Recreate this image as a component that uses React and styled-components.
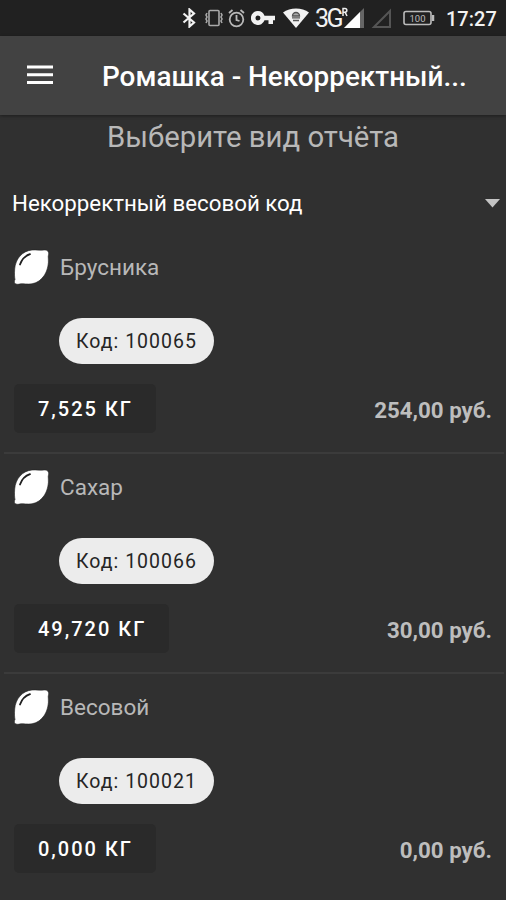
import React from 'react'
import styled, { createGlobalStyle } from 'styled-components'

const GlobalStyle = createGlobalStyle`
  * {
    box-sizing: border-box;
  }

  body {
    margin: 0;
    background-color: #303030;
    font-family: Roboto, 'Liberation Sans', sans-serif;
  }

  button {
    font-family: inherit;
    border: none;
  }

  svg {
    display: block;
    flex: none;
  }
`

const Screen = styled.div`
  width: 506px;
  height: 900px;
  overflow: hidden;
  background-color: #303030;
  color: #b8b8b8;
`

const StatusBar = styled.div`
  display: flex;
  align-items: center;
  height: 36px;
  padding-left: 182px;
  background-color: #212121;
  color: #f2f2f2;
`

const StatusIcon = styled.svg`
  margin-left: ${({ $gap }) => $gap || 0}px;
`

const Network = styled.span`
  width: 27px;
  margin-left: 6px;
  font-size: 25px;
  line-height: 36px;
  letter-spacing: -2.5px;
  padding-top: 1px;
`

const Clock = styled.span`
  margin-left: 11px;
  font-size: 20px;
  font-weight: 500;
  line-height: 36px;
  padding-top: 2px;
`

const AppBar = styled.header`
  display: flex;
  align-items: center;
  height: 79px;
  padding-left: 26px;
  background-color: #424242;
  color: #fff;
  box-shadow: 0 1px 3px rgba(0, 0, 0, 0.4);
`

const MenuButton = styled.button`
  width: 28px;
  height: 22px;
  padding: 0;
  margin-bottom: 2px;
  background: none;
`

const Title = styled.h1`
  margin: 3px 0 0 48px;
  font-size: 27.9px;
  font-weight: 500;
  line-height: 36px;
  white-space: nowrap;
`

const Heading = styled.h2`
  margin: 0;
  padding-top: 4px;
  font-size: 29.3px;
  font-weight: 400;
  line-height: 36px;
  text-align: center;
`

const Select = styled.div`
  display: flex;
  align-items: center;
  justify-content: space-between;
  height: 64px;
  margin-top: 16px;
  padding: 0 6px 0 12px;
  color: #fff;
  font-size: 22.3px;
`

const List = styled.ul`
  margin: -1px 0 0;
  padding: 0 2px 0 4px;
  list-style: none;
`

const Item = styled.li`
  height: 220px;
  padding: 15px 10px 0;
  border-bottom: 2px solid #3b3b3b;

  &:last-child {
    border-bottom: none;
  }
`

const Product = styled.div`
  display: flex;
  align-items: center;
  gap: 11px;
  height: 36px;
  font-size: 22.5px;
`

const Chip = styled.span`
  display: flex;
  align-items: center;
  justify-content: center;
  width: 155px;
  height: 46px;
  margin: 33px 0 0 45px;
  border-radius: 23px;
  background-color: #ececec;
  color: #252525;
  font-size: 19.5px;
  letter-spacing: 1px;
`

const Totals = styled.div`
  display: flex;
  align-items: center;
  justify-content: space-between;
  margin-top: 20px;
`

const Weight = styled.button`
  height: 49px;
  padding: 1px 23px 0 24px;
  border-radius: 5px;
  background-color: #2a2a2a;
  color: #fff;
  font-size: 20px;
  font-weight: 500;
  letter-spacing: 2px;
`

const Price = styled.span`
  padding-top: 2px;
  padding-right: 2px;
  color: #bdbdbd;
  font-size: 22.3px;
  font-weight: 700;
`

const products = [
  { name: 'Брусника', code: 100065, weight: '7,525', price: '254,00' },
  { name: 'Сахар', code: 100066, weight: '49,720', price: '30,00' },
  { name: 'Весовой', code: 100021, weight: '0,000', price: '0,00' }
]

function StatusIcons () {
  return (
    <>
      <StatusIcon width='15' height='20' viewBox='0 0 15 20' fill='none' stroke='currentColor' strokeWidth='2.2'>
        <path d='M1.5 5.5L12 14.5L7.5 18.5V1.5L12 5.5L1.5 14.5' />
      </StatusIcon>
      <StatusIcon $gap={7} width='20' height='18' viewBox='0 0 20 18' fill='none' stroke='#a8a8a8' strokeWidth='1.6'>
        <rect x='5' y='1.5' width='10' height='15' rx='1' />
        <path d='M3 4l-1 2 1 2-1 2 1 2-1 2M17 4l1 2-1 2 1 2-1 2 1 2' />
      </StatusIcon>
      <StatusIcon $gap={4} width='17' height='19' viewBox='0 0 17 19' fill='none' stroke='#b8b8b8' strokeWidth='1.8'>
        <circle cx='8.5' cy='10.5' r='6.8' />
        <path d='M8.5 6v5l3 1M1 4l3.5-3M16 4l-3.5-3' />
      </StatusIcon>
      <StatusIcon $gap={6} width='25' height='14' viewBox='0 0 25 14' fill='currentColor'>
        <path fillRule='evenodd' d='M7 0a7 7 0 0 1 6.5 4.700H24v4.600h-2V13h-4.500V9.300h-4A7 7 0 1 1 7 0zm0 4.500a2.500 2.500 0 1 0 0 5 2.500 2.500 0 0 0 0-5z' />
      </StatusIcon>
      <StatusIcon $gap={7} width='26' height='20' viewBox='0 0 26 20' fill='currentColor'>
        <path d='M0 4.500C7-1 19-1 26 4.500L13 20z' />
        <path d='M9.500 8a3.500 3.500 0 0 1 7 0zM9 9.800h8M10 12.500h6' fill='#aaa' stroke='#555' strokeWidth='1.300' />
      </StatusIcon>
      <Network>3G</Network>
      <StatusIcon width='24' height='22' viewBox='0 0 24 22'>
        <path d='M2 21L22 1v20z' fill='#666' />
        <path d='M2 21L18 5v16z' fill='#fff' />
        <path d='M1 9V1.500h2a1.800 1.800 0 0 1 0 3.700h-2M3 5.200L5 9' fill='none' stroke='#eee' strokeWidth='1.500' />
      </StatusIcon>
      <StatusIcon $gap={5} width='22' height='21' viewBox='0 0 22 21' fill='none' stroke='#555' strokeWidth='2'>
        <path d='M3 19L19 3v16z' />
      </StatusIcon>
      <StatusIcon $gap={10} width='32' height='16' viewBox='0 0 32 16' fill='none' stroke='#bbb' strokeWidth='1.600'>
        <rect x='1' y='1.500' width='27' height='13' rx='2' />
        <path d='M30 5v6' strokeWidth='2.500' />
        <text x='14.500' y='11.500' fill='#bbb' stroke='none' fontSize='9.500' textAnchor='middle'>100</text>
      </StatusIcon>
    </>
  )
}

function Lemon () {
  return (
    <svg width='35' height='36' viewBox='0 0 35 36'>
      <path
        d='M2 35C0 35 0 32 1 30.500C.5 28 .3 25 .7 20C1.500 10 8 2 18 1C23 .6 27 1.500 30.500 1C33 .5 35 2.500 34.700 5C34.500 6.500 34 7 34.300 9C35.500 21 29 33 18 34.800C13 35.500 10 34.500 7 34.800C5 35 4 35.700 2 35z'
        fill='#fff'
        stroke='#202020'
        strokeWidth='.6'
      />
      <path d='M6 15.500C8 10 11 6.800 16 5.200' fill='none' stroke='#202020' strokeWidth='1.800' strokeLinecap='round' />
    </svg>
  )
}

function ProductItem ({ name, code, weight, price }) {
  return (
    <Item>
      <Product>
        <Lemon />
        {name}
      </Product>
      <Chip>Код: {code}</Chip>
      <Totals>
        <Weight>{weight} КГ</Weight>
        <Price>{price} руб.</Price>
      </Totals>
    </Item>
  )
}

export default function App () {
  return (
    <Screen>
      <GlobalStyle />
      <StatusBar>
        <StatusIcons />
        <Clock>17:27</Clock>
      </StatusBar>
      <AppBar>
        <MenuButton aria-label='Меню'>
          <svg width='28' height='22' viewBox='0 0 28 22' stroke='#fff' strokeWidth='3'>
            <path d='M1 3h26M1 10.800h26M1 18.500h26' />
          </svg>
        </MenuButton>
        <Title>Ромашка - Некорректный...</Title>
      </AppBar>
      <Heading>Выберите вид отчёта</Heading>
      <Select>
        Некорректный весовой код
        <svg width='15' height='9' viewBox='0 0 15 9' fill='#c4c4c4'>
          <path d='M0 0h15L7.500 8.500z' />
        </svg>
      </Select>
      <List>
        {products.map(product => (
          <ProductItem key={product.code} {...product} />
        ))}
      </List>
    </Screen>
  )
}
